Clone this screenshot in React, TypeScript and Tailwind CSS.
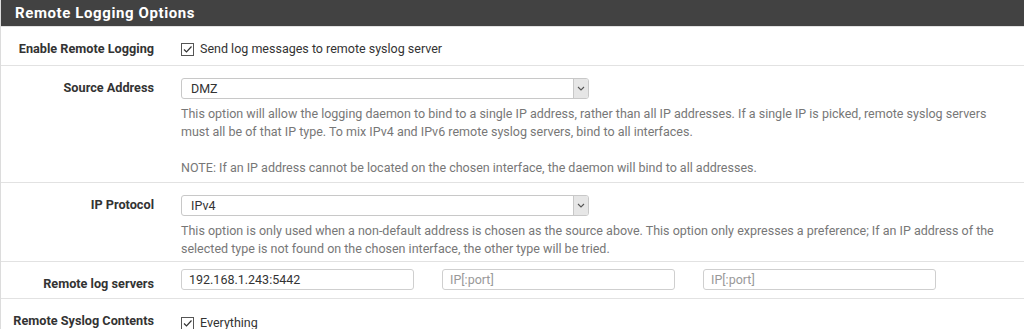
import React from "react";

const font = { fontFamily: "Roboto, 'Liberation Sans', sans-serif" };

function Chevron() {
  return (
    <svg width="8" height="5" viewBox="0 0 8 5" className="text-[#555]">
      <path d="M1 1l3 3 3-3" fill="none" stroke="currentColor" strokeWidth="1.1" />
    </svg>
  );
}

function Select({ value }: { value: string }) {
  return (
    <div className="flex h-[21px] w-[408px] items-stretch rounded-[3px] border border-[#c8c8c8] bg-white">
      <span className="flex-1 pl-[9px] text-[12.5px] leading-[20px] text-[#333]">{value}</span>
      <span className="flex w-[15px] items-center justify-center rounded-r-[2px] border-l border-[#c8c8c8] bg-[#e6e6e6]">
        <Chevron />
      </span>
    </div>
  );
}

function Checkbox() {
  return (
    <span className="flex h-[13px] w-[13px] items-center justify-center border border-[#555] bg-white">
      <svg width="11" height="11" viewBox="0 0 11 11">
        <path d="M2 5.5l2.5 2.5L9.5 2.5" fill="none" stroke="#333" strokeWidth="1.2" />
      </svg>
    </span>
  );
}

function Row({
  label,
  children,
  className = "",
}: {
  label: string;
  children: React.ReactNode;
  className?: string;
}) {
  return (
    <div className={"flex items-start border-b border-[#e2e2e2] " + className}>
      <div className="w-[165px] shrink-0 pt-[13px] pr-[12px] text-right text-[12.7px] font-bold leading-[18px] text-[#333]">
        {label}
      </div>
      <div className="flex-1 pl-[15px] pr-[20px]">{children}</div>
    </div>
  );
}

function Help({ children }: { children: React.ReactNode }) {
  return <p className="text-[12.5px] leading-[18px] text-[#777]">{children}</p>;
}

export default function App() {
  return (
    <div className="h-[329px] w-[1024px] overflow-hidden bg-white" style={font}>
      <div className="border-l border-[#dcdcdc]">
        <div className="flex h-[26px] items-center bg-[#424242] pl-[14px] text-[15px] font-bold tracking-[0.6px] text-white">
          Remote Logging Options
        </div>
        <div className="h-px bg-[#e2e2e2]" />

        <Row label="Enable Remote Logging" className="h-[39px]">
          <div className="flex items-center gap-[6px] pt-[13px] text-[12.5px] leading-[18px] text-[#333]">
            <Checkbox />
            <span>Send log messages to remote syslog server</span>
          </div>
        </Row>

        <Row label="Source Address" className="h-[117px]">
          <div className="pt-[12px]">
            <Select value="DMZ" />
            <div className="mt-[6px]">
              <Help>
                This option will allow the logging daemon to bind to a single IP address, rather than all IP addresses. If a single IP is picked, remote syslog servers must all be of that IP type. To mix IPv4 and IPv6 remote syslog servers, bind to all interfaces.
              </Help>
              <div className="h-[18px]" />
              <Help>NOTE: If an IP address cannot be located on the chosen interface, the daemon will bind to all addresses.</Help>
            </div>
          </div>
        </Row>

        <Row label="IP Protocol" className="h-[79px]">
          <div className="pt-[12px]">
            <Select value="IPv4" />
            <div className="mt-[6px]">
              <Help>
                This option is only used when a non-default address is chosen as the source above. This option only expresses a preference; If an IP address of the selected type is not found on the chosen interface, the other type will be tried.
              </Help>
            </div>
          </div>
        </Row>

        <Row label="Remote log servers" className="h-[37px]">
          <div className="flex gap-[28px] pt-[7px]">
            {["192.168.1.243:5442", "", ""].map((v, i) => (
              <div
                key={i}
                className={
                  "h-[21px] w-[233px] rounded-[3px] border border-[#cfcfcf] pl-[7px] text-[12.5px] leading-[19px] " +
                  (v ? "text-[#333]" : "text-[#999]")
                }
              >
                {v || "IP[:port]"}
              </div>
            ))}
          </div>
        </Row>

        <Row label="Remote Syslog Contents" className="h-[40px] border-b-0">
          <div className="flex items-center gap-[6px] pt-[15px] text-[12.5px] leading-[18px] text-[#333]">
            <Checkbox />
            <span>Everything</span>
          </div>
        </Row>
      </div>
    </div>
  );
}
